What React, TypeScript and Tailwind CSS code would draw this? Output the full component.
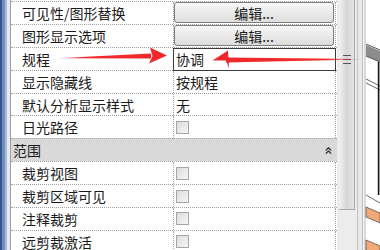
import { ChevronsUp } from 'lucide-react';

type Row =
  | { kind: 'button'; label: string }
  | { kind: 'input'; label: string; value: string }
  | { kind: 'text'; label: string; value: string }
  | { kind: 'check'; label: string }
  | { kind: 'header'; label: string };

const rows: Row[] = [
  { kind: 'button', label: '可见性/图形替换' },
  { kind: 'button', label: '图形显示选项' },
  { kind: 'input', label: '规程', value: '协调' },
  { kind: 'text', label: '显示隐藏线', value: '按规程' },
  { kind: 'text', label: '默认分析显示样式', value: '无' },
  { kind: 'check', label: '日光路径' },
  { kind: 'header', label: '范围' },
  { kind: 'check', label: '裁剪视图' },
  { kind: 'check', label: '裁剪区域可见' },
  { kind: 'check', label: '注释裁剪' },
  { kind: 'check', label: '远剪裁激活' },
];

function Checkbox() {
  return (
    <div className="ml-[2px] h-[13px] w-[13px] border border-[#a6a6a6] bg-gradient-to-br from-[#dcdcdc] to-[#f6f6f6]" />
  );
}

function PropertyRow({ row }: { row: Row }) {
  if (row.kind === 'header') {
    return (
      <div className="flex h-[22.9px] w-[326px] items-center justify-between border-t border-dotted border-[#a0a0a0] bg-[#d9d9d9] pl-[2px] pr-[3px]">
        <span className="leading-none">{row.label}</span>
        <ChevronsUp size={11} strokeWidth={2.6} className="text-[#333]" />
      </div>
    );
  }

  return (
    <div className="flex h-[22.9px] border-t border-dotted border-[#a0a0a0]">
      <div className="flex w-[163px] items-center border-r border-dotted border-[#a0a0a0] pl-[11px]">
        <span className="leading-none">{row.label}</span>
      </div>
      <div className="relative flex w-[162px] items-center border-r border-dotted border-[#a0a0a0]">
        {row.kind === 'button' && (
          <button className="mr-[1px] flex h-[21px] w-full items-center justify-center rounded-[3px] border border-[#7c7c7c] bg-gradient-to-b from-[#f6f6f6] to-[#dedede] leading-none text-[#1a1a1a]">
            编辑...
          </button>
        )}
        {row.kind === 'input' && (
          <div className="absolute bottom-[-1px] left-[-1px] right-[-1px] top-0 flex items-center border border-[#3a3a3a] bg-white pl-[2px]">
            <span className="leading-none">{row.value}</span>
          </div>
        )}
        {row.kind === 'text' && <span className="pl-[2px] leading-none">{row.value}</span>}
        {row.kind === 'check' && <Checkbox />}
      </div>
    </div>
  );
}

function Arrows() {
  return (
    <svg className="pointer-events-none absolute inset-0" width="380" height="250" viewBox="0 0 380 250">
      <defs>
        <linearGradient id="tailA" x1="56" y1="0" x2="150" y2="0" gradientUnits="userSpaceOnUse">
          <stop offset="0" stopColor="#f02a2a" stopOpacity="0.35" />
          <stop offset="0.3" stopColor="#f02a2a" stopOpacity="1" />
        </linearGradient>
        <linearGradient id="tailB" x1="226" y1="0" x2="362" y2="0" gradientUnits="userSpaceOnUse">
          <stop offset="0.75" stopColor="#f02a2a" stopOpacity="1" />
          <stop offset="1" stopColor="#f02a2a" stopOpacity="0" />
        </linearGradient>
      </defs>
      <polygon points="56,58.2 151,53.4 151,58.4" fill="url(#tailA)" />
      <polygon points="150,47.5 167,55.5 149,63.5 152.5,56" fill="#f02a2a" />
      <polygon points="226,57.6 226,62.6 362,59.6 362,59" fill="url(#tailB)" />
      <polygon points="212.5,60.6 228,50.5 229,68.4 226,60.4" fill="#f02a2a" />
    </svg>
  );
}

function Drawing() {
  return (
    <svg width="16" height="250" viewBox="0 0 16 250" className="shrink-0">
      <line x1="1" y1="0" x2="1" y2="250" stroke="#b4b4b4" strokeWidth="1" />
      <line x1="2" y1="44" x2="16" y2="50" stroke="#555" strokeWidth="1" />
      <polygon points="2,45 16,51 16,62 2,56" fill="#8c8c8c" />
      <line x1="2" y1="56" x2="16" y2="62" stroke="#555" strokeWidth="1" />
      <line x1="2" y1="79" x2="16" y2="86" stroke="#444" strokeWidth="0.8" />
      <line x1="2" y1="83" x2="16" y2="90" stroke="#444" strokeWidth="0.8" />
      <line x1="14.6" y1="62" x2="14.6" y2="195" stroke="#111" strokeWidth="1.6" />
      <line x1="2" y1="195" x2="16" y2="203" stroke="#444" strokeWidth="0.8" />
      <polygon points="2,207 16,213 16,223 2,217" fill="#f2a877" stroke="#555" strokeWidth="0.8" />
      <polygon points="2,240 16,246 16,256 2,250" fill="#f2a877" stroke="#555" strokeWidth="0.8" />
    </svg>
  );
}

export default function App() {
  return (
    <div className="relative flex h-[250px] w-[380px] overflow-hidden bg-white font-['Noto_Sans_CJK_SC','Liberation_Sans',sans-serif] text-[14px] text-[#1a1a1a]">
      {/* window frame on the left */}
      <div className="flex shrink-0">
        <div className="w-[2px] bg-[#34548a]" />
        <div className="w-[3px] bg-[#6e8fc2]" />
        <div className="w-[2px] bg-[#a9bad4]" />
        <div className="w-[3px] bg-[#e6e9ee]" />
        <div className="w-[1px] bg-[#a0a0a0]" />
      </div>

      {/* properties grid */}
      <div className="mt-[1px] w-[326px] shrink-0">
        {rows.map((row, i) => (
          <PropertyRow key={i} row={row} />
        ))}
      </div>

      {/* scrollbar */}
      <div className="flex w-[20px] shrink-0 flex-col bg-[#ececec]">
        <div className="ml-[2px] flex h-[210px] w-[16px] flex-col items-center gap-[3px] border-b border-r border-[#a8a8a8] bg-gradient-to-r from-[#f2f2f2] via-[#d6d6d6] to-[#e4e4e4] pt-[55px]">
          <div className="h-[1px] w-[8px] bg-[#555]" />
          <div className="h-[1px] w-[8px] bg-[#555]" />
          <div className="h-[1px] w-[8px] bg-[#555]" />
        </div>
      </div>

      {/* splitter */}
      <div className="flex shrink-0">
        <div className="w-[1px] bg-[#c2c2c2]" />
        <div className="w-[4px] bg-[#e9e9e9]" />
        <div className="w-[1px] bg-[#bdbdbd]" />
        <div className="w-[1px] bg-[#f4f4f4]" />
      </div>

      <Drawing />
      <Arrows />
    </div>
  );
}
